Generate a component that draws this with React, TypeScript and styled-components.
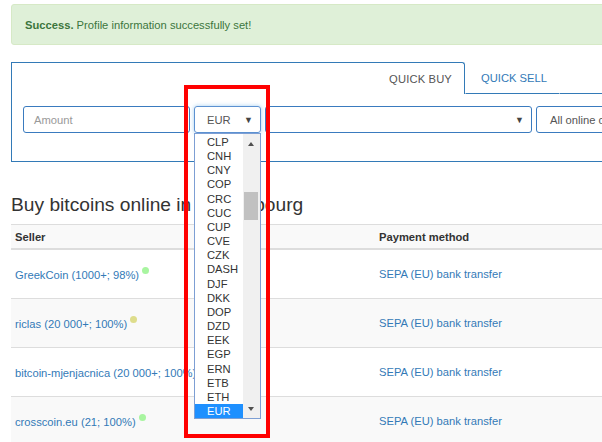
import React from "react";
import styled, { createGlobalStyle } from "styled-components";

const GlobalStyle = createGlobalStyle`
  html, body {
    margin: 0;
    padding: 0;
    overflow: hidden;
    background: #fff;
  }
  body {
    font-family: "Liberation Sans", Arial, sans-serif;
    font-size: 11.2px;
    color: #333;
  }
`;

const CURRENCIES = [
  "CLP", "CNH", "CNY", "COP", "CRC", "CUC", "CUP", "CVE", "CZK", "DASH",
  "DJF", "DKK", "DOP", "DZD", "EEK", "EGP", "ERN", "ETB", "ETH", "EUR",
];

type Offer = { seller: string; dot?: string; payment: string };

const OFFERS: Offer[] = [
  { seller: "GreekCoin (1000+; 98%)", dot: "#a8f5a0", payment: "SEPA (EU) bank transfer" },
  { seller: "riclas (20 000+; 100%)", dot: "#dedd8c", payment: "SEPA (EU) bank transfer" },
  { seller: "bitcoin-mjenjacnica (20 000+; 100%)", dot: "#a8f5a0", payment: "SEPA (EU) bank transfer" },
  { seller: "crosscoin.eu (21; 100%)", dot: "#a8f5a0", payment: "SEPA (EU) bank transfer" },
];

const Page = styled.div`
  position: relative;
  width: 660px;
  padding: 4px 0 0 11px;
`;

const Alert = styled.div`
  height: 41px;
  box-sizing: border-box;
  display: flex;
  align-items: center;
  padding: 0 13px;
  background: #dff0d8;
  border: 1px solid #d6e9c6;
  border-radius: 3px;
  color: #3c763d;
  line-height: 16px;

  b {
    font-weight: bold;
  }
`;

const Panel = styled.div`
  margin-top: 17px;
`;

const TabRow = styled.div`
  display: flex;
  height: 32px;
`;

const Tab = styled.div<{ $active?: boolean }>`
  display: flex;
  align-items: center;
  justify-content: flex-end;
  box-sizing: border-box;
  padding: 0 12px 0 ${({ $active }) => ($active ? "12px" : "15px")};
  color: ${({ $active }) => ($active ? "#555" : "#337ab7")};
  border: 1px solid ${({ $active }) => ($active ? "#337ab7" : "transparent")};
  border-bottom: ${({ $active }) => ($active ? "none" : "1px solid #337ab7")};
  border-radius: ${({ $active }) => ($active ? "0 3px 0 0" : "0")};
  flex: ${({ $active }) => ($active ? "0 0 454px" : "0 0 auto")};
  letter-spacing: ${({ $active }) => ($active ? "0.15px" : "0")};
`;

const TabFill = styled.div`
  flex: 1;
  border-bottom: 1px solid #337ab7;
`;

const PanelBody = styled.div`
  border: 1px solid #337ab7;
  border-top: none;
  padding: 12px 11px 28px;
  box-sizing: border-box;
  height: 68px;
`;

const Controls = styled.div`
  display: flex;
  gap: 4px;
`;

const Field = styled.div<{ $width: number; $focus?: boolean }>`
  position: relative;
  flex: 0 0 ${({ $width }) => $width}px;
  box-sizing: border-box;
  height: 27px;
  display: flex;
  align-items: center;
  padding: 0 7px 0 ${({ $focus }) => ($focus ? "12px" : "10px")};
  border: 1px solid ${({ $focus }) => ($focus ? "#5c91d1" : "#3a7bbf")};
  border-radius: 3px;
  box-shadow: ${({ $focus }) =>
    $focus ? "0 0 4px rgba(102,175,233,0.6)" : "none"};
  color: #555;
  font-size: 11.2px;
`;

const Placeholder = styled.span`
  color: #999;
`;

const Value = styled.span<{ $indent?: number }>`
  flex: 1;
  color: #555;
  padding-left: ${({ $indent }) => $indent ?? 0}px;
  white-space: nowrap;
`;

const Caret = styled.span`
  font-size: 9px;
  color: #444;
`;

const DropList = styled.div`
  position: absolute;
  top: 26px;
  left: -1px;
  width: 67px;
  height: 286px;
  box-sizing: border-box;
  border: 1px solid #7d9fd4;
  background: #fff;
  display: flex;
  z-index: 5;
`;

const Options = styled.div`
  flex: 1;
  overflow: hidden;
  padding-top: 1px;
`;

const Option = styled.div<{ $selected?: boolean }>`
  height: 14.16px;
  line-height: 14.16px;
  padding-left: 12px;
  font-size: 11.2px;
  color: ${({ $selected }) => ($selected ? "#fff" : "#333")};
  background: ${({ $selected }) => ($selected ? "#1e90ff" : "transparent")};
`;

const ScrollTrack = styled.div`
  position: relative;
  flex: 0 0 17px;
  background: #f0f0f0;
`;

const ScrollThumb = styled.div`
  position: absolute;
  left: 1px;
  right: 2px;
  top: 58px;
  height: 28px;
  background: #c1c1c1;
`;

const ScrollArrow = styled.div<{ $down?: boolean }>`
  position: absolute;
  left: 5px;
  ${({ $down }) => ($down ? "bottom: 7px;" : "top: 8px;")}
  width: 0;
  height: 0;
  border-left: 3.5px solid transparent;
  border-right: 3.5px solid transparent;
  ${({ $down }) =>
    $down ? "border-top: 4px solid #505050;" : "border-bottom: 4px solid #505050;"}
`;

const Heading = styled.h3`
  margin: 32px 0 8px;
  font-size: 19.2px;
  font-weight: normal;
  line-height: 22px;
  color: #333;
`;

const Table = styled.table`
  width: 650px;
  border-collapse: collapse;
  border-top: 1px solid #ddd;
`;

const HeadCell = styled.th<{ $width?: number }>`
  width: ${({ $width }) => ($width ? `${$width}px` : "auto")};
  height: 23px;
  padding: 0 4px;
  text-align: left;
  font-weight: bold;
  background: #f9f9f9;
  border-bottom: 2px solid #ddd;
`;

const Row = styled.tr<{ $striped: boolean }>`
  background: ${({ $striped }) => ($striped ? "#f9f9f9" : "#fff")};
  border-bottom: 1px solid #ddd;
`;

const Cell = styled.td`
  height: 48px;
  padding: 0 4px;
  vertical-align: middle;
`;

const Link = styled.a`
  color: #337ab7;
  text-decoration: none;
`;

const Dot = styled.span<{ $color: string }>`
  display: inline-block;
  width: 7px;
  height: 7px;
  margin-left: 3px;
  border-radius: 50%;
  background: ${({ $color }) => $color};
  vertical-align: 5px;
`;

const Highlight = styled.div`
  position: absolute;
  left: 184px;
  top: 85px;
  width: 86px;
  height: 353px;
  box-sizing: border-box;
  border: 4px solid #ff0000;
  pointer-events: none;
  z-index: 10;
`;

export default function App() {
  return (
    <>
      <GlobalStyle />
      <Page>
        <Alert>
          <span>
            <b>Success.</b> Profile information successfully set!
          </span>
        </Alert>

        <Panel>
          <TabRow>
            <Tab $active>QUICK BUY</Tab>
            <Tab>QUICK SELL</Tab>
            <TabFill />
          </TabRow>
          <PanelBody>
            <Controls>
              <Field $width={167}>
                <Placeholder>Amount</Placeholder>
              </Field>
              <Field $width={67} $focus>
                <Value>EUR</Value>
                <Caret>▼</Caret>
                <DropList>
                  <Options>
                    {CURRENCIES.map((c) => (
                      <Option key={c} $selected={c === "EUR"}>
                        {c}
                      </Option>
                    ))}
                  </Options>
                  <ScrollTrack>
                    <ScrollArrow />
                    <ScrollThumb />
                    <ScrollArrow $down />
                  </ScrollTrack>
                </DropList>
              </Field>
              <Field $width={267}>
                <Value />
                <Caret>▼</Caret>
              </Field>
              <Field $width={120}>
                <Value $indent={3}>All online offers</Value>
              </Field>
            </Controls>
          </PanelBody>
        </Panel>

        <Heading>Buy bitcoins online in Luxembourg</Heading>

        <Table>
          <thead>
            <tr>
              <HeadCell $width={356}>Seller</HeadCell>
              <HeadCell>Payment method</HeadCell>
            </tr>
          </thead>
          <tbody>
            {OFFERS.map((o, i) => (
              <Row key={o.seller} $striped={i % 2 === 1}>
                <Cell>
                  <Link>{o.seller}</Link>
                  {o.dot && <Dot $color={o.dot} />}
                </Cell>
                <Cell>
                  <Link>{o.payment}</Link>
                </Cell>
              </Row>
            ))}
          </tbody>
        </Table>

        <Highlight />
      </Page>
    </>
  );
}
